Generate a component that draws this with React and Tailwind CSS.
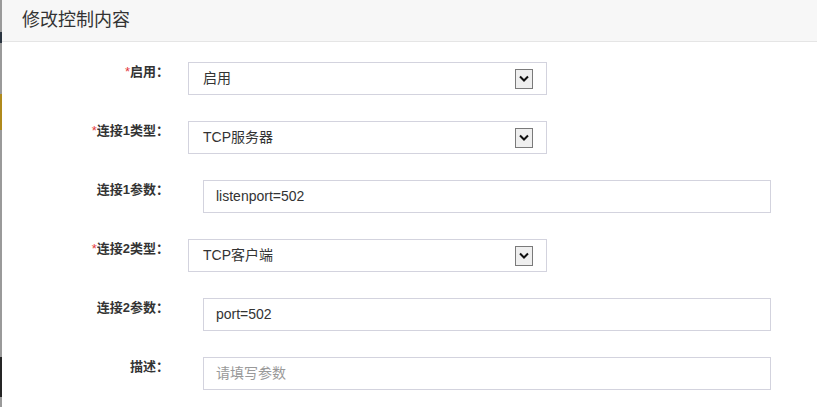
import React from 'react';

const FONT = { fontFamily: '"Liberation Sans", Arial, "Noto Sans CJK SC", sans-serif' };

const rows = [
  { label: '启用', required: true, type: 'select', value: '启用' },
  { label: '连接1类型', required: true, type: 'select', value: 'TCP服务器' },
  { label: '连接1参数', type: 'input', value: 'listenport=502' },
  { label: '连接2类型', required: true, type: 'select', value: 'TCP客户端' },
  { label: '连接2参数', type: 'input', value: 'port=502' },
  { label: '描述', type: 'input', value: '', placeholder: '请填写参数' },
];

function ArrowBox() {
  return (
    <div className="w-[18px] h-[20px] border border-[#7a7a7a] bg-[#efefef] flex items-center justify-center">
      <svg width="10" height="7" viewBox="0 0 10 7">
        <path d="M1 1.5 L5 5.5 L9 1.5" fill="none" stroke="#111" strokeWidth="2" />
      </svg>
    </div>
  );
}

function FormRow({ row }) {
  return (
    <div className="flex items-start h-[33px]">
      <div className="w-[167px] text-right text-[13px] font-bold text-[#333] leading-[20px]">
        {row.required && <span className="text-[#e4393c] font-normal">*</span>}
        {row.label}：
      </div>
      {row.type === 'select' ? (
        <div className="ml-[19px] w-[359px] h-[33px] border border-[#d3d3de] flex items-center justify-between pl-[14px] pr-[13px] text-[14px] text-[#333]">
          <span>{row.value}</span>
          <ArrowBox />
        </div>
      ) : (
        <div className="ml-[34px] w-[568px] h-[33px] border border-[#d3d3de] flex items-center pl-[12px] text-[14px]">
          {row.value ? (
            <span className="text-[#333]">{row.value}</span>
          ) : (
            <span className="text-[#999]">{row.placeholder}</span>
          )}
        </div>
      )}
    </div>
  );
}

export default function App() {
  return (
    <div className="flex w-[817px] h-[407px] bg-white overflow-hidden" style={FONT}>
      <div className="w-[2px] flex flex-col shrink-0 bg-[#9a9a9a]">
        <div className="h-[32px]" />
        <div className="h-[11px] bg-[#2a3540]" />
        <div className="h-[51px]" />
        <div className="h-[36px] bg-[#b08a1c]" />
        <div className="h-[227px]" />
        <div className="h-[40px] bg-[#252525]" />
      </div>
      <div className="flex-1 flex flex-col">
        <div className="h-[42px] bg-[#f7f7f7] border-b border-[#e5e5e5] flex items-center pl-[20px] text-[18px] text-[#333] shrink-0">
          修改控制内容
        </div>
        <div className="flex flex-col gap-[26px] pt-[20px]">
          {rows.map((r) => (
            <FormRow key={r.label} row={r} />
          ))}
        </div>
      </div>
    </div>
  );
}
